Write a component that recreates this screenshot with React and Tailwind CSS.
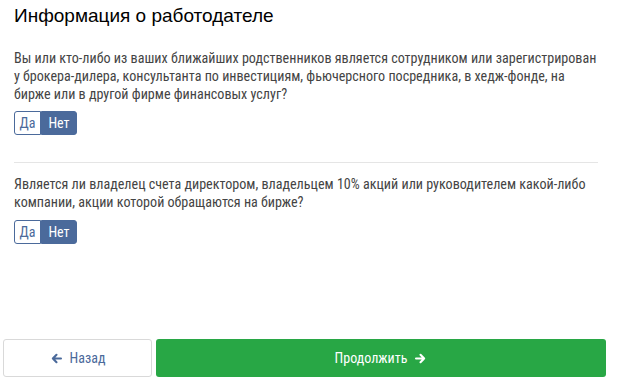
import React, { useState } from 'react';

const ArrowLeft = ({ className }) => (
  <svg viewBox="0 0 16 16" className={className} fill="none" stroke="currentColor" strokeWidth="2.6" strokeLinecap="round" strokeLinejoin="round">
    <path d="M13.5 8H3.5M8 3.5L3.5 8L8 12.5" />
  </svg>
);

const ArrowRight = ({ className }) => (
  <svg viewBox="0 0 16 16" className={className} fill="none" stroke="currentColor" strokeWidth="2.6" strokeLinecap="round" strokeLinejoin="round">
    <path d="M2.5 8h10M8 3.5L12.5 8L8 12.5" />
  </svg>
);

const YesNo = ({ value, onChange }) => (
  <div className="flex">
    <button
      onClick={() => onChange('yes')}
      className={`h-[24px] w-[27px] rounded-l-[3px] border border-[#4b6a9b] text-[14px] leading-none ${
        value === 'yes' ? 'bg-[#4b6a9b] text-white' : 'bg-white text-[#4b6a9b]'
      }`}
    >
      Да
    </button>
    <button
      onClick={() => onChange('no')}
      className={`h-[24px] w-[36px] rounded-r-[3px] border border-[#4b6a9b] text-[14px] leading-none ${
        value === 'no' ? 'bg-[#4b6a9b] text-white' : 'bg-white text-[#4b6a9b]'
      }`}
    >
      Нет
    </button>
  </div>
);

export default function App() {
  const [first, setFirst] = useState('no');
  const [second, setSecond] = useState('no');

  return (
    <div className="w-[629px] h-[390px] bg-white flex flex-col font-['Liberation_Sans_Narrow','Roboto_Condensed',sans-serif]">
      <div className="px-[14px] pt-[3px] flex-1">
        {/* Title */}
        <h1 className="text-[19px] leading-[26px] text-black font-['Liberation_Sans',sans-serif]">Информация о работодателе</h1>

        {/* Question 1 */}
        <div className="w-[584px] pt-[20px] pb-[27px] border-b border-[#e5e5e5]">
          <p className="w-[590px] text-[14.1px] leading-[18px] text-[#444] mb-[8px]">
            Вы или кто-либо из ваших ближайших родственников является сотрудником или зарегистрирован у брокера-дилера, консультанта по инвестициям, фьючерсного посредника, в хедж-фонде, на бирже или в другой фирме финансовых услуг?
          </p>
          <YesNo value={first} onChange={setFirst} />
        </div>

        {/* Question 2 */}
        <div className="w-[584px] pt-[12px]">
          <p className="w-[590px] text-[14.1px] leading-[18px] text-[#444] mb-[9px]">
            Является ли владелец счета директором, владельцем 10% акций или руководителем какой-либо компании, акции которой обращаются на бирже?
          </p>
          <YesNo value={second} onChange={setSecond} />
        </div>
      </div>

      {/* Footer */}
      <div className="flex gap-[4px] pl-[3px] pr-[23px] pb-[13px]">
        <button className="w-[149px] h-[38px] rounded-[3px] border border-[#d9d9d9] bg-white text-[#4b6a9b] text-[14px] flex items-center justify-center gap-[7px]">
          <ArrowLeft className="w-[13px] h-[13px]" />
          Назад
        </button>
        <button className="flex-1 h-[38px] rounded-[3px] bg-[#28a745] text-white text-[14px] flex items-center justify-center gap-[7px]">
          Продолжить
          <ArrowRight className="w-[13px] h-[13px]" />
        </button>
      </div>
    </div>
  );
}
